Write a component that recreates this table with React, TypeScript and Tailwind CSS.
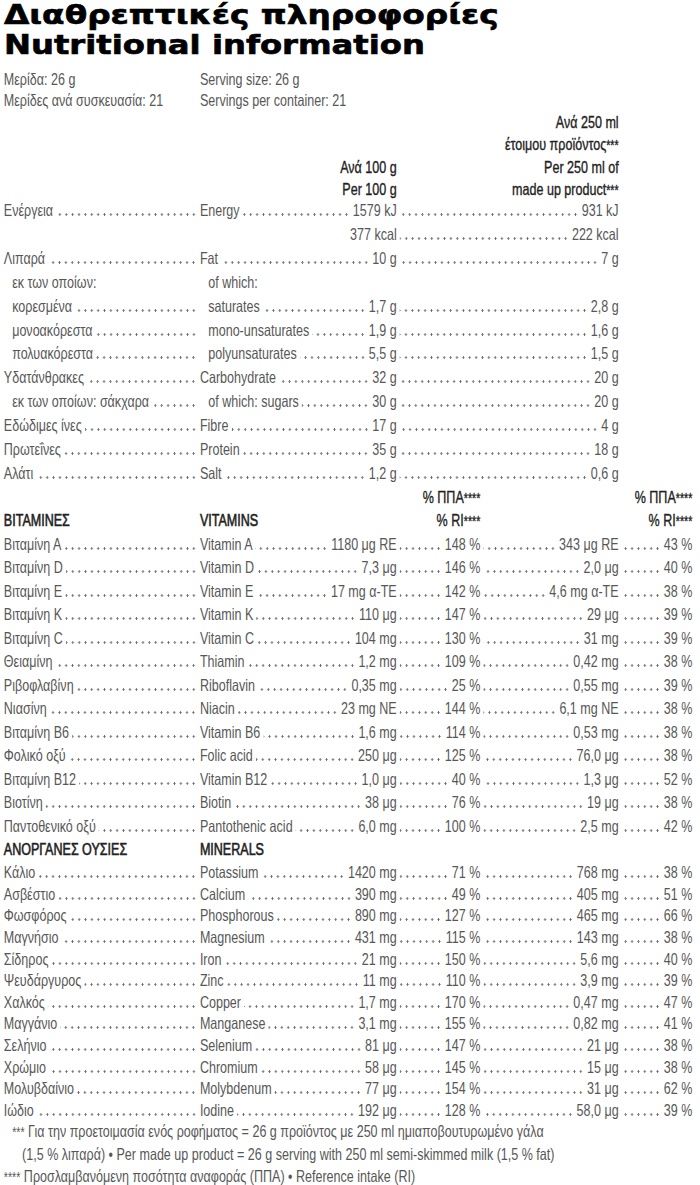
import React from "react";

// Nutrition facts panel (Greek / English), fixed column grid with dot leaders.
// Body text is set in Liberation Sans and squeezed horizontally (scale-x) to get
// the condensed look of the printed label; all widths below are pre-scale.

type TopRow = {
  gr: string;
  en: string;
  v100?: string;
  v250?: string;
  indent?: boolean;
  bare?: boolean; // no leaders in the label columns
};

const TOP_ROWS: TopRow[] = [
  { gr: "Ενέργεια", en: "Energy", v100: "1579 kJ", v250: "931 kJ" },
  { gr: "", en: "", v100: "377 kcal", v250: "222 kcal", bare: true },
  { gr: "Λιπαρά", en: "Fat", v100: "10 g", v250: "7 g" },
  { gr: "εκ των οποίων:", en: "of which:", indent: true, bare: true },
  { gr: "κορεσμένα", en: "saturates", v100: "1,7 g", v250: "2,8 g", indent: true },
  { gr: "μονοακόρεστα", en: "mono-unsaturates", v100: "1,9 g", v250: "1,6 g", indent: true },
  { gr: "πολυακόρεστα", en: "polyunsaturates", v100: "5,5 g", v250: "1,5 g", indent: true },
  { gr: "Υδατάνθρακες", en: "Carbohydrate", v100: "32 g", v250: "20 g" },
  { gr: "εκ των οποίων: σάκχαρα", en: "of which: sugars", v100: "30 g", v250: "20 g", indent: true },
  { gr: "Εδώδιμες ίνες", en: "Fibre", v100: "17 g", v250: "4 g" },
  { gr: "Πρωτεΐνες", en: "Protein", v100: "35 g", v250: "18 g" },
  { gr: "Αλάτι", en: "Salt", v100: "1,2 g", v250: "0,6 g" },
];

// [greek, english, per 100 g, %RI, per 250 ml, %RI]
type RiRow = [string, string, string, string, string, string];

const VITAMINS: RiRow[] = [
  ["Βιταμίνη Α", "Vitamin A", "1180 μg RE", "148 %", "343 μg RE", "43 %"],
  ["Βιταμίνη D", "Vitamin D", "7,3 μg", "146 %", "2,0 μg", "40 %"],
  ["Βιταμίνη Ε", "Vitamin E", "17 mg α-TE", "142 %", "4,6 mg α-TE", "38 %"],
  ["Βιταμίνη Κ", "Vitamin K", "110 μg", "147 %", "29 μg", "39 %"],
  ["Βιταμίνη C", "Vitamin C", "104 mg", "130 %", "31 mg", "39 %"],
  ["Θειαμίνη", "Thiamin", "1,2 mg", "109 %", "0,42 mg", "38 %"],
  ["Ριβοφλαβίνη", "Riboflavin", "0,35 mg", "25 %", "0,55 mg", "39 %"],
  ["Νιασίνη", "Niacin", "23 mg NE", "144 %", "6,1 mg NE", "38 %"],
  ["Βιταμίνη B6", "Vitamin B6", "1,6 mg", "114 %", "0,53 mg", "38 %"],
  ["Φολικό οξύ", "Folic acid", "250 μg", "125 %", "76,0 μg", "38 %"],
  ["Βιταμίνη B12", "Vitamin B12", "1,0 μg", "40 %", "1,3 μg", "52 %"],
  ["Βιοτίνη", "Biotin", "38 μg", "76 %", "19 μg", "38 %"],
  ["Παντοθενικό οξύ", "Pantothenic acid", "6,0 mg", "100 %", "2,5 mg", "42 %"],
];

const MINERALS: RiRow[] = [
  ["Κάλιο", "Potassium", "1420 mg", "71 %", "768 mg", "38 %"],
  ["Ασβέστιο", "Calcium", "390 mg", "49 %", "405 mg", "51 %"],
  ["Φωσφόρος", "Phosphorous", "890 mg", "127 %", "465 mg", "66 %"],
  ["Μαγνήσιο", "Magnesium", "431 mg", "115 %", "143 mg", "38 %"],
  ["Σίδηρος", "Iron", "21 mg", "150 %", "5,6 mg", "40 %"],
  ["Ψευδάργυρος", "Zinc", "11 mg", "110 %", "3,9 mg", "39 %"],
  ["Χαλκός", "Copper", "1,7 mg", "170 %", "0,47 mg", "47 %"],
  ["Μαγγάνιο", "Manganese", "3,1 mg", "155 %", "0,82 mg", "41 %"],
  ["Σελήνιο", "Selenium", "81 μg", "147 %", "21 μg", "38 %"],
  ["Χρώμιο", "Chromium", "58 μg", "145 %", "15 μg", "38 %"],
  ["Μολυβδαίνιο", "Molybdenum", "77 μg", "154 %", "31 μg", "62 %"],
  ["Ιώδιο", "Iodine", "192 μg", "128 %", "58,0 μg", "39 %"],
];

function Dots() {
  return (
    <span className="mx-[4px] h-[3px] min-w-0 flex-1 bg-[radial-gradient(circle,#707070_1.05px,transparent_1.5px)] bg-[length:8.4px_3px] bg-right bg-repeat-x" />
  );
}

function Stars({ n }: { n: number }) {
  return <span className="text-[14px]">{"*".repeat(n)}</span>;
}

function TopLine({ row }: { row: TopRow }) {
  return (
    <div className="flex items-baseline">
      <div className={`flex w-[258px] items-baseline ${row.indent ? "pl-[11px]" : ""}`}>
        <span className="whitespace-nowrap">{row.gr}</span>
        {!row.bare && <Dots />}
      </div>
      <div className="flex w-[259px] items-baseline">
        <span className={`whitespace-nowrap ${row.indent ? "pl-[11px]" : ""}`}>{row.en}</span>
        {row.v100 && (
          <>
            {row.bare ? <span className="flex-1" /> : <Dots />}
            <span className="whitespace-nowrap">{row.v100}</span>
          </>
        )}
      </div>
      {row.v250 && (
        <div className="flex w-[292px] items-baseline">
          <Dots />
          <span className="whitespace-nowrap">{row.v250}</span>
        </div>
      )}
    </div>
  );
}

function RiLine({ row }: { row: RiRow }) {
  const [gr, en, v100, p100, v250, p250] = row;
  return (
    <div className="flex items-baseline">
      <div className="flex w-[258px] items-baseline">
        <span className="whitespace-nowrap">{gr}</span>
        <Dots />
      </div>
      <div className="flex w-[259px] items-baseline">
        <span className="whitespace-nowrap">{en}</span>
        <Dots />
        <span className="whitespace-nowrap">{v100}</span>
      </div>
      <div className="flex w-[110px] items-baseline">
        <Dots />
        <span className="whitespace-nowrap">{p100}</span>
      </div>
      <div className="flex w-[182px] items-baseline">
        <Dots />
        <span className="whitespace-nowrap">{v250}</span>
      </div>
      <div className="flex w-[97px] items-baseline">
        <Dots />
        <span className="whitespace-nowrap">{p250}</span>
      </div>
    </div>
  );
}

export default function App() {
  return (
    <div className="h-[1185px] w-[700px] overflow-hidden bg-white">
      {/* title */}
      <div className="pl-[4px] font-['DejaVu_Sans',sans-serif] text-[26px] font-bold leading-[30px] text-black [-webkit-text-stroke:0.6px_black]">
        <div className="origin-left scale-x-[1.26] whitespace-nowrap">Διαθρεπτικές πληροφορίες</div>
        <div className="origin-left scale-x-[1.24] whitespace-nowrap">Nutritional information</div>
      </div>

      <div className="w-[921px] origin-top-left scale-x-[0.76] pl-[5px] font-['Liberation_Sans',Arial,sans-serif] text-[16.5px] text-[#575757]">
        {/* serving */}
        <div className="mt-[9px] leading-[21px]">
          <div className="flex">
            <span className="w-[258px]">Μερίδα: 26 g</span>
            <span>Serving size: 26 g</span>
          </div>
          <div className="flex">
            <span className="w-[258px]">Μερίδες ανά συσκευασία: 21</span>
            <span>Servings per container: 21</span>
          </div>
        </div>

        {/* column heads */}
        <div className="leading-[22px] text-[#222] [-webkit-text-stroke:0.35px_#222]">
          <div className="flex">
            <span className="w-[517px]" />
            <span className="w-[292px] text-right">Ανά 250 ml</span>
          </div>
          <div className="flex">
            <span className="w-[517px]" />
            <span className="w-[292px] text-right">
              έτοιμου προϊόντος<Stars n={3} />
            </span>
          </div>
          <div className="flex">
            <span className="w-[517px] text-right">Ανά 100 g</span>
            <span className="w-[292px] text-right">Per 250 ml of</span>
          </div>
          <div className="flex">
            <span className="w-[517px] text-right">Per 100 g</span>
            <span className="w-[292px] text-right">
              made up product<Stars n={3} />
            </span>
          </div>
        </div>

        {/* energy & macros */}
        <div className="-mt-[2px] leading-[23.9px]">
          {TOP_ROWS.map((r, i) => (
            <TopLine key={i} row={r} />
          ))}
        </div>

        {/* RI heads */}
        <div className="text-[#222] [-webkit-text-stroke:0.35px_#222]">
          <div className="flex leading-[22px]">
            <span className="w-[627px] text-right">
              % ΠΠΑ<Stars n={4} />
            </span>
            <span className="w-[279px] text-right">
              % ΠΠΑ<Stars n={4} />
            </span>
          </div>
          <div className="flex leading-[23px]">
            <span className="w-[258px] [-webkit-text-stroke:0.6px_#222]">ΒΙΤΑΜΙΝΕΣ</span>
            <span className="w-[259px] [-webkit-text-stroke:0.6px_#222]">VITAMINS</span>
            <span className="w-[110px] text-right">
              % RI<Stars n={4} />
            </span>
            <span className="w-[279px] text-right">
              % RI<Stars n={4} />
            </span>
          </div>
        </div>

        {/* vitamins */}
        <div className="leading-[23.5px]">
          {VITAMINS.map((r) => (
            <RiLine key={r[1]} row={r} />
          ))}
        </div>

        <div className="flex leading-[23.8px] text-[#222] [-webkit-text-stroke:0.6px_#222]">
          <span className="w-[258px]">ΑΝΟΡΓΑΝΕΣ ΟΥΣΙΕΣ</span>
          <span>MINERALS</span>
        </div>

        {/* minerals */}
        <div className="leading-[21.6px]">
          {MINERALS.map((r) => (
            <RiLine key={r[1]} row={r} />
          ))}
        </div>

        {/* footnotes */}
        <div className="leading-[21.8px]">
          <div className="whitespace-nowrap pl-[11px]">
            <Stars n={3} /> Για την προετοιμασία ενός ροφήματος = 26 g προϊόντος με 250 ml ημιαποβουτυρωμένο γάλα
          </div>
          <div className="whitespace-nowrap pl-[24px]">
            (1,5 % λιπαρά) • Per made up product = 26 g serving with 250 ml semi-skimmed milk (1,5 % fat)
          </div>
          <div className="whitespace-nowrap">
            <Stars n={4} /> Προσλαμβανόμενη ποσότητα αναφοράς (ΠΠΑ) • Reference intake (RI)
          </div>
        </div>
      </div>
    </div>
  );
}
